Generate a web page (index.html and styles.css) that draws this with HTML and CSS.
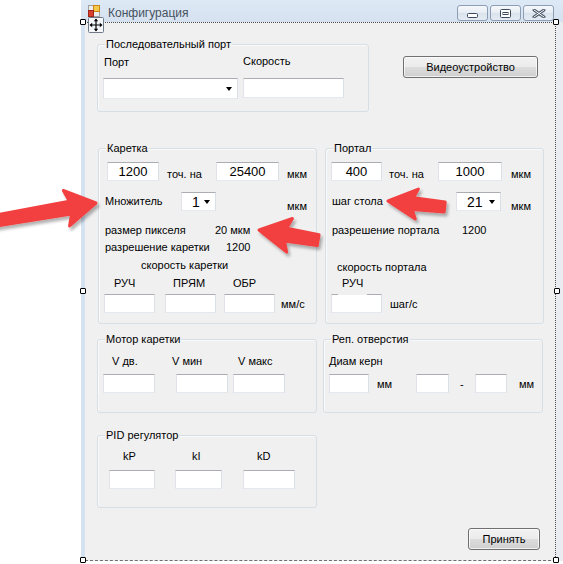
FILE: index.html
```html
<!doctype html>
<html lang="ru">
<head>
    <meta charset="UTF-8">
    <title>Конфигурация</title>
    <link rel="stylesheet" href="styles.css">
</head>
<body>
<div class="desk">
    <div class="gutter"></div>
    <div class="window">
        <div class="titlebar">
            <svg class="app-icon" width="12" height="12" viewBox="0 0 12 12">
                <rect x="0.5" y="0.5" width="11" height="11" fill="#ececec" stroke="#a0a0a0"/>
                <rect x="5.5" y="0.5" width="6" height="6" fill="#f7c948" stroke="#c8861c"/>
                <rect x="0.5" y="5.5" width="5" height="6" fill="#d9412e" stroke="#9e2616"/>
            </svg>
            <span class="caption">Конфигурация</span>
            <div class="caption-btns">
                <span class="cbtn cbtn-min">
                    <svg width="11" height="5" viewBox="0 0 11 5"><rect x="0.5" y="0.5" width="10" height="4" rx="1" fill="#fff" stroke="#3d4a5b"/></svg>
                </span>
                <span class="cbtn">
                    <svg width="11" height="9" viewBox="0 0 11 9"><rect x="0.5" y="0.5" width="10" height="8" rx="1" fill="#fff" stroke="#3d4a5b"/><rect x="3" y="3.5" width="5" height="2" fill="none" stroke="#3d4a5b"/></svg>
                </span>
                <span class="cbtn">
                    <svg width="14" height="9" viewBox="0 0 14 9"><path d="M2 1 L12 8 M12 1 L2 8" stroke="#4a5668" stroke-width="3" stroke-linecap="round"/><path d="M2 1 L12 8 M12 1 L2 8" stroke="#fff" stroke-width="1" stroke-linecap="round"/></svg>
                </span>
            </div>
        </div>
        <div class="frame">
            <div class="form">
                <div class="line line-1">
                    <div class="group serial">
                        <span class="group-title">Последовательный порт</span>
                        <div class="row s-l">
                            <span class="lbl">Порт</span>
                            <span class="lbl up1">Скорость</span>
                        </div>
                        <div class="row s-t">
                            <div class="combo w135 h21"><span></span><i class="drop"></i></div>
                            <input class="tb w101 h20" value="">
                        </div>
                    </div>
                    <div class="btn video">Видеоустройство</div>
                </div>

                <div class="line line-2">
                    <div class="group carriage">
                        <span class="group-title">Каретка</span>
                        <div class="row k-a">
                            <input class="tb w52" value="1200">
                            <span class="lbl off6">точ. на</span>
                            <input class="tb w63" value="25400">
                            <span class="lbl off6">мкм</span>
                        </div>
                        <div class="row k-b">
                            <span class="lbl off3">Множитель</span>
                            <div class="combo w35"><span>1</span><i class="drop"></i></div>
                            <span class="lbl off8">мкм</span>
                        </div>
                        <div class="row k-c">
                            <span class="lbl">размер пикселя</span>
                            <span class="lbl">20 мкм</span>
                        </div>
                        <div class="row k-d">
                            <span class="lbl">разрешение каретки</span>
                            <span class="lbl">1200</span>
                        </div>
                        <div class="row k-e">
                            <span class="lbl">скорость каретки</span>
                        </div>
                        <div class="row k-f">
                            <span class="lbl">РУЧ</span>
                            <span class="lbl">ПРЯМ</span>
                            <span class="lbl">ОБР</span>
                        </div>
                        <div class="row k-g">
                            <input class="tb w51" value="">
                            <input class="tb w51" value="">
                            <input class="tb w51" value="">
                            <span class="lbl off4">мм/с</span>
                        </div>
                    </div>

                    <div class="group portal">
                        <span class="group-title">Портал</span>
                        <div class="row p-a">
                            <input class="tb w51" value="400">
                            <span class="lbl off6">точ. на</span>
                            <input class="tb w64" value="1000">
                            <span class="lbl off6">мкм</span>
                        </div>
                        <div class="row p-b">
                            <span class="lbl off3">шаг стола</span>
                            <div class="combo w45"><span>21</span><i class="drop"></i></div>
                            <span class="lbl off8">мкм</span>
                        </div>
                        <div class="row p-c">
                            <span class="lbl">разрешение портала</span>
                            <span class="lbl">1200</span>
                        </div>
                        <div class="row p-d">
                            <span class="lbl">скорость портала</span>
                        </div>
                        <div class="row p-e">
                            <span class="lbl on-box">РУЧ</span>
                        </div>
                        <div class="row p-f">
                            <input class="tb w51" value="">
                            <span class="lbl off4">шаг/с</span>
                        </div>
                    </div>
                </div>

                <div class="line line-3">
                    <div class="group motor">
                        <span class="group-title">Мотор каретки</span>
                        <div class="row m-l">
                            <span class="lbl">V дв.</span>
                            <span class="lbl">V мин</span>
                            <span class="lbl">V макс</span>
                        </div>
                        <div class="row m-t">
                            <input class="tb w52" value="">
                            <input class="tb w52" value="">
                            <input class="tb w52" value="">
                        </div>
                    </div>

                    <div class="group rep">
                        <span class="group-title">Реп. отверстия</span>
                        <div class="row r-l">
                            <span class="lbl">Диам керн</span>
                        </div>
                        <div class="row r-t">
                            <input class="tb w40" value="">
                            <span class="lbl off4">мм</span>
                            <input class="tb w33" value="">
                            <span class="lbl off4">-</span>
                            <input class="tb w32" value="">
                            <span class="lbl off4">мм</span>
                        </div>
                    </div>
                </div>

                <div class="line line-4">
                    <div class="group pid">
                        <span class="group-title">PID регулятор</span>
                        <div class="row d-l">
                            <span class="lbl">kP</span>
                            <span class="lbl">kI</span>
                            <span class="lbl">kD</span>
                        </div>
                        <div class="row d-t">
                            <input class="tb w46" value="">
                            <input class="tb w47" value="">
                            <input class="tb w52" value="">
                        </div>
                    </div>
                </div>

                <div class="line line-5">
                    <div class="btn accept">Принять</div>
                </div>

                <!-- selection handles of the designer -->
                <span class="handle h-tl"></span>
                <span class="handle h-tr"></span>
                <span class="handle h-ml"></span>
                <span class="handle h-mr"></span>
                <span class="handle h-bl"></span>
                <span class="handle h-br"></span>
            </div>
        </div>
    </div>
</div>

<svg class="move" width="16" height="16" viewBox="0 0 16 16">
    <rect x="0.5" y="0.5" width="15" height="15" rx="1" fill="#f4f6f9" stroke="#6f7a88"/>
    <path d="M8 2.5 V13.5 M2.5 8 H13.5" stroke="#000" stroke-width="1.2"/>
    <path d="M8 1.5 L5.8 4.2 H10.2 Z M8 14.5 L5.8 11.8 H10.2 Z M1.5 8 L4.2 5.8 V10.2 Z M14.5 8 L11.8 5.8 V10.2 Z" fill="#000"/>
</svg>

<svg class="arrows" width="563" height="564" viewBox="0 0 563 564">
    <defs>
        <filter id="shadow" x="-20%" y="-40%" width="150%" height="190%">
            <feDropShadow dx="2" dy="3" stdDeviation="1.8" flood-color="#000" flood-opacity="0.3"/>
        </filter>
        <linearGradient id="red" x1="0" y1="0" x2="0" y2="1">
            <stop offset="0" stop-color="#ff5252"/>
            <stop offset="1" stop-color="#ec3434"/>
        </linearGradient>
    </defs>
    <g filter="url(#shadow)" fill="#f24040" stroke="#f24040" stroke-width="3" stroke-linejoin="round">
        <path transform="translate(96 203) rotate(-10)" d="M0,0 L-30,-18 L-26,-6.5 L-102,-5.5 L-102,5.5 L-26,6.5 L-30,18 Z"/>
        <path transform="translate(259 230) rotate(189.8)" d="M0,0 L-31,-17 L-27,-6.5 L-60,-5.5 L-60,5.5 L-27,6.5 L-31,17 Z"/>
        <path transform="translate(388 201) rotate(186)" d="M0,0 L-29,-15 L-25,-6 L-57,-5 L-57,5 L-25,6 L-29,15 Z"/>
    </g>
</svg>
</body>
</html>
```

FILE: styles.css
```css
body {
    margin: 0;
    width: 563px;
    height: 564px;
    overflow: hidden;
    position: relative;
    background: #fff;
    color: #000;
    font-family: "Liberation Sans", Arial, sans-serif;
    font-size: 11px;
}

.desk {
    display: flex;
    height: 564px;
}

.gutter {
    width: 81px;
    flex: none;
}

.window {
    width: 482px;
    flex: none;
    display: flex;
    flex-direction: column;
}

/* caption */
.titlebar {
    height: 22px;
    display: flex;
    align-items: flex-start;
    padding-left: 7px;
    background: linear-gradient(#dee9f6, #d5e1ef);
}

.app-icon {
    flex: none;
    margin-top: 5px;
}

.caption {
    margin: 6px 0 0 8px;
    font-size: 12px;
    line-height: 15px;
    color: #46525f;
}

.caption-btns {
    margin: 5px 9px 0 auto;
    display: flex;
    gap: 2px;
}

.cbtn {
    width: 31px;
    height: 16px;
    box-sizing: border-box;
    border: 1px solid #8d9db5;
    border-radius: 3px;
    background: linear-gradient(#f6f9fc, #e6ecf3 50%, #d9e2ec 51%, #e4ebf3);
    display: flex;
    align-items: center;
    justify-content: center;
}

.cbtn-min {
    align-items: flex-end;
    padding-bottom: 2px;
}

/* window body */
.frame {
    display: flex;
    height: 539px;
    border-left: 4px solid #d4e2f2;
    background: #e9edf2;
}

.form {
    position: relative;
    width: 470px;
    height: 537px;
    background: #f0f0f0;
    border-top: 1px dotted #4d4d4d;
    border-right: 1px dotted #4d4d4d;
    border-bottom: 1px dashed #6e6e6e;
}

.line {
    display: flex;
    align-items: flex-start;
}

.line-1 { margin: 21px 0 0 12px; }
.line-2 { margin: 36px 0 0 13px; }
.line-3 { margin: 15px 0 0 12px; }
.line-4 { margin: 22px 0 0 12px; }
.line-5 { margin: 20px 0 0 383px; }

/* group boxes */
.group {
    position: relative;
    flex: none;
    box-sizing: border-box;
    border: 1px solid #d5dfe5;
    border-radius: 3px;
    box-shadow: inset 1px 1px 0 #fafafa;
}

.group-title {
    position: absolute;
    top: -7px;
    left: 7px;
    padding: 0 1px;
    background: #f0f0f0;
    line-height: 13px;
    white-space: nowrap;
}

.serial { width: 272px; height: 68px; padding-top: 11px; }
.carriage { width: 219px; height: 176px; padding-top: 13px; }
.portal { width: 219px; height: 176px; padding-top: 13px; margin-left: 8px; }
.motor { width: 220px; height: 74px; padding-top: 15px; }
.rep { width: 220px; height: 74px; padding-top: 15px; margin-left: 6px; }
.pid { width: 220px; height: 73px; padding-top: 14px; }

/* rows inside the groups */
.row {
    display: grid;
    grid-auto-flow: column;
    justify-content: start;
    align-items: start;
}

.s-l { padding-left: 6px; grid-template-columns: 139px; }
.s-t { margin-top: 9px; padding-left: 5px; grid-template-columns: 140px; }

.k-a { padding-left: 8px; grid-template-columns: 60px 49px 71px; }
.k-b { margin-top: 11px; padding-left: 6px; grid-template-columns: 76px 106px; height: 19px; }
.k-c { margin-top: 13px; padding-left: 6px; grid-template-columns: 110px; }
.k-d { margin-top: 4px; padding-left: 6px; grid-template-columns: 121px; }
.k-e { margin-top: 5px; padding-left: 42px; }
.k-f { margin-top: 5px; padding-left: 15px; grid-template-columns: 59px 60px; }
.k-g { margin-top: 4px; padding-left: 5px; grid-template-columns: 61px 59px 57px; }

.p-a { padding-left: 5px; grid-template-columns: 58px 49px 73px; }
.p-b { margin-top: 11px; padding-left: 6px; grid-template-columns: 124px 55px; height: 19px; }
.p-c { margin-top: 13px; padding-left: 6px; grid-template-columns: 130px; }
.p-d { margin-top: 24px; padding-left: 11px; }
.p-e { margin-top: 3px; padding-left: 12px; position: relative; z-index: 1; }
.p-f { margin-top: 4px; padding-left: 5px; grid-template-columns: 59px; }

.m-l { padding-left: 14px; grid-template-columns: 60px 66px; }
.m-t { margin-top: 6px; padding-left: 5px; grid-template-columns: 73px 57px; }

.r-l { padding-left: 5px; }
.r-t { margin-top: 6px; padding-left: 5px; grid-template-columns: 48px 39px 44px 15px 44px; }

.d-l { padding-left: 25px; grid-template-columns: 69px 65px; }
.d-t { margin-top: 7px; padding-left: 11px; grid-template-columns: 66px 68px; }

.lbl {
    line-height: 13px;
    white-space: nowrap;
}

/* label whose box hangs over the text box below it */
.on-box {
    padding: 0 4px 5px;
    margin-bottom: -5px;
    background: #f0f0f0;
}

.up1 { margin-top: -1px; }
.off3 { padding-top: 3px; }
.off4 { padding-top: 4px; }
.off6 { padding-top: 6px; }
.off8 { padding-top: 8px; }

/* text boxes and combo boxes */
.tb {
    box-sizing: border-box;
    height: 19px;
    margin: 0;
    padding: 0 2px;
    border: 1px solid;
    border-color: #abadb3 #dbdfe6 #e3e9ef #e2e3ea;
    background: #fff;
    color: #000;
    font: 13px "Liberation Sans", Arial, sans-serif;
    text-align: center;
    outline: none;
}

.combo {
    box-sizing: border-box;
    height: 19px;
    display: flex;
    align-items: center;
    justify-content: space-between;
    padding: 0 5px 0 10px;
    border: 1px solid;
    border-color: #abadb3 #dbdfe6 #e3e9ef #e2e3ea;
    background: #fff;
    font-size: 14px;
}

.drop {
    width: 0;
    height: 0;
    border-left: 3.5px solid transparent;
    border-right: 3.5px solid transparent;
    border-top: 4px solid #000;
}

.w32 { width: 32px; }
.w33 { width: 33px; }
.w35 { width: 35px; }
.w40 { width: 40px; }
.w45 { width: 45px; }
.w46 { width: 46px; }
.w47 { width: 47px; }
.w51 { width: 51px; }
.w52 { width: 52px; }
.w63 { width: 63px; }
.w64 { width: 64px; }
.w101 { width: 101px; }
.w135 { width: 135px; }
.h20 { height: 20px; }
.h21 { height: 21px; }

/* push buttons */
.btn {
    box-sizing: border-box;
    height: 22px;
    flex: none;
    border: 1px solid #707070;
    border-radius: 3px;
    background: linear-gradient(#f2f2f2, #ebebeb 50%, #dddddd 50%, #cfcfcf);
    box-shadow: inset 0 0 0 1px rgba(255, 255, 255, 0.7);
    display: flex;
    align-items: center;
    justify-content: center;
}

.video {
    width: 135px;
    margin: 12px 0 0 34px;
}

.accept {
    width: 72px;
}

/* designer overlays */
.handle {
    position: absolute;
    width: 4px;
    height: 4px;
    border: 1px solid #000;
    border-radius: 1px;
    background: #fff;
}

.h-tl { left: -5px; top: -4px; }
.h-tr { left: 468px; top: -4px; }
.h-ml { left: -5px; top: 265px; }
.h-mr { left: 469px; top: 265px; }
.h-bl { left: -5px; top: 534px; }
.h-br { left: 468px; top: 534px; }

.move {
    position: absolute;
    left: 88px;
    top: 17px;
}

.arrows {
    position: absolute;
    left: 0;
    top: 0;
    pointer-events: none;
}
```
